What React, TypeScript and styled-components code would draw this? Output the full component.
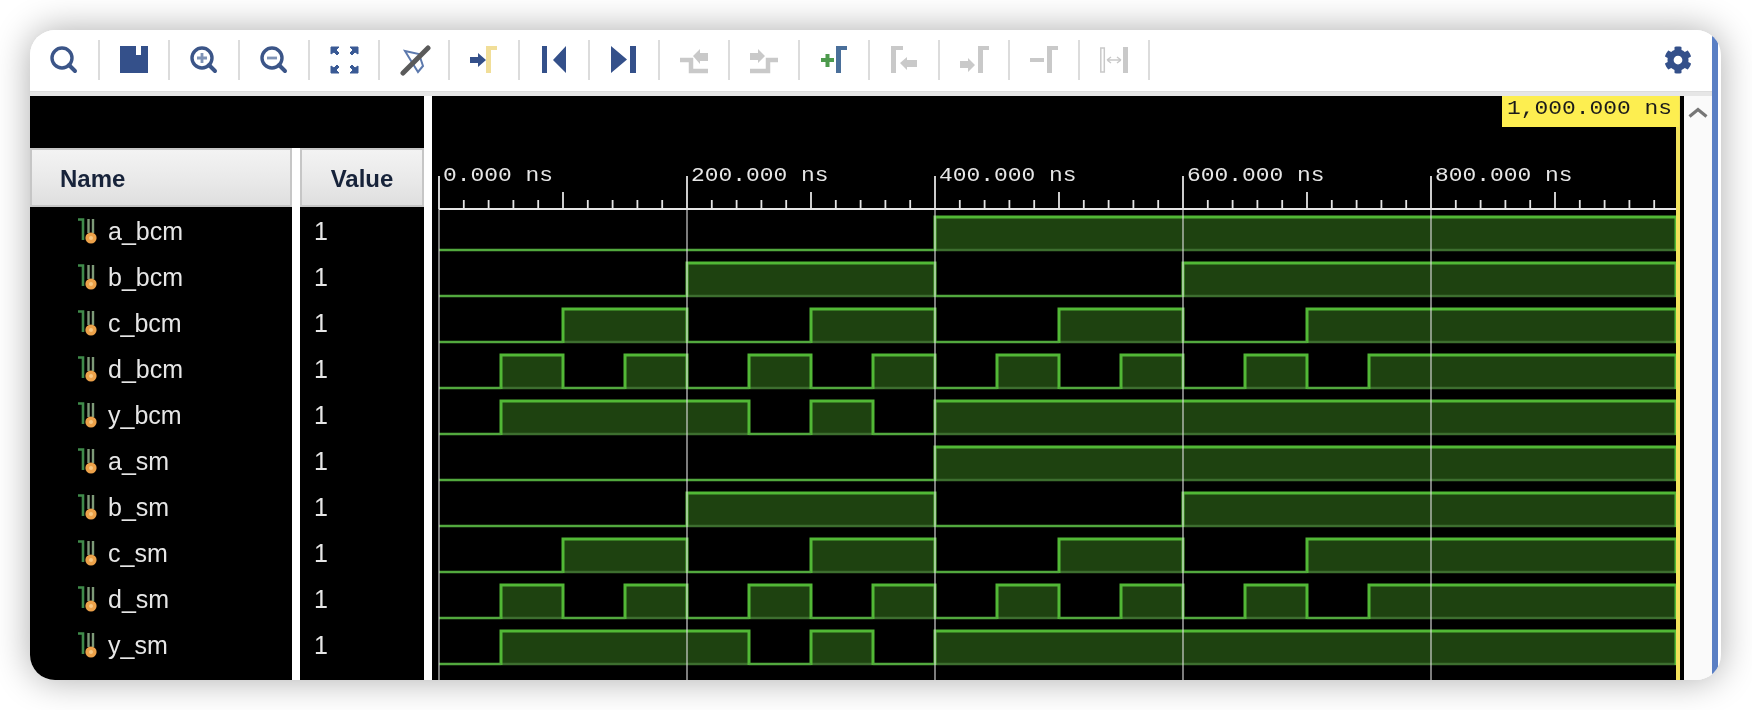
import React from "react";
import styled, { createGlobalStyle } from "styled-components";
import { FaCog } from "react-icons/fa";

const Global = createGlobalStyle`
  html, body { margin: 0; padding: 0; background: #fff; }
  body { width: 1752px; height: 710px; overflow: hidden; font-family: "Liberation Sans", Arial, sans-serif; }
`;

const Page = styled.div`
  width: 1752px;
  height: 710px;
  padding: 30px 31px 30px 30px;
  box-sizing: border-box;
`;

const Card = styled.div`
  display: flex;
  width: 1691px;
  height: 650px;
  padding-right: 3px;
  box-sizing: border-box;
  background: #fff;
  border-radius: 25px;
  overflow: hidden;
  box-shadow: 0 0 36px rgba(0, 0, 0, 0.33);
`;

const Main = styled.div`
  flex: 1;
  display: flex;
  flex-direction: column;
  min-width: 0;
`;

const BlueBar = styled.div`
  width: 6px;
  background: #5a7fc4;
`;

const Toolbar = styled.div`
  display: flex;
  height: 66px;
  box-sizing: border-box;
  padding: 10px 20px 0 0;
  background: #fff;
  border-bottom: 4px solid #e6e6e6;
  box-shadow: inset 0 -1px 0 #ddd;
`;

const ToolCell = styled.div`
  width: 70px;
  height: 40px;
  box-sizing: border-box;
  padding-left: 15px;
  border-right: 2px solid #dcdcdc;
  filter: blur(0.55px);
  svg { display: block; }
`;

const GearBox = styled.div`
  margin-left: auto;
  height: 40px;
  display: flex;
  align-items: center;
  color: #34508a;
  filter: blur(0.5px);
`;

const Body = styled.div`
  flex: 1;
  display: flex;
  min-height: 0;
`;

const LeftPane = styled.div`
  width: 394px;
  margin-right: 8px;
  display: flex;
  flex-direction: column;
  background: #fff;
`;

const TopSpacer = styled.div`
  height: 52px;
  background: #000;
`;

const Columns = styled.div`
  flex: 1;
  display: flex;
  gap: 8px;
`;

const Column = styled.div<{ $width: number }>`
  width: ${(p) => p.$width}px;
  display: flex;
  flex-direction: column;
  background: #000;
`;

const HeaderCell = styled.div<{ $center?: boolean }>`
  height: 59px;
  box-sizing: border-box;
  display: flex;
  align-items: center;
  justify-content: ${(p) => (p.$center ? "center" : "flex-start")};
  padding: ${(p) => (p.$center ? "3px 0 0 0" : "3px 0 0 28px")};
  border: 2px solid #c6c6c6;
  background: linear-gradient(#f3f3f3, #e9e9e9 55%, #dfdfdf);
  color: #17233a;
  font-size: 24px;
  font-weight: 700;
  span { filter: blur(0.45px); }
`;

const Rows = styled.div`
  padding-top: 1px;
`;

const SignalRow = styled.div<{ $indent: number }>`
  height: 46px;
  display: flex;
  align-items: center;
  gap: 9px;
  padding-left: ${(p) => p.$indent}px;
  color: #e6e6e6;
  font-size: 25px;
  filter: blur(0.55px);
`;

const WavePane = styled.div`
  width: 1252px;
  background: #000;
`;

const WaveSvg = styled.svg`
  display: block;
  filter: blur(0.5px);
`;

const ScrollTrack = styled.div`
  width: 28px;
  display: flex;
  justify-content: center;
  padding-top: 11px;
  box-sizing: border-box;
  background: #fafafa;
`;

const BLUE = "#34508a";
const GREY = "#c9c9c9";

const Lens = ({ mark }: { mark?: "plus" | "minus" }) => (
  <svg width="40" height="40" viewBox="0 0 40 40">
    <circle cx="17" cy="18" r="10" fill="none" stroke="#3b5588" strokeWidth="3.4" />
    <path d="M24 25l6 6" stroke="#3b5588" strokeWidth="4" strokeLinecap="round" />
    {mark && <path d={mark === "plus" ? "M12 18h10M17 13v10" : "M12 18h10"} stroke="#7f93b6" strokeWidth="2.8" />}
  </svg>
);

const Svg = ({ children }: { children: React.ReactNode }) => (
  <svg width="40" height="40" viewBox="0 0 40 40">{children}</svg>
);

const Gamma = ({ x, color, w = 11 }: { x: number; color: string; w?: number }) => (
  <path d={`M${x} 6h${w}v4h-${w - 5}v23h-5z`} fill={color} />
);

const icons = [
  <Lens key="search" />,
  <Svg key="save">
    <path fillRule="evenodd" d="M5 6h28v27H5zM21 6v9h5V6z" fill={BLUE} />
  </Svg>,
  <Lens key="in" mark="plus" />,
  <Lens key="out" mark="minus" />,
  <Svg key="fit">
    <g fill="#3a5a95" stroke="#3a5a95" strokeWidth="1">
      <path d="M6 7h8l-3 3 3 3-2 2-3-3-3 2z" />
      <path d="M33 7h-8l3 3-3 3 2 2 3-3 3 2z" />
      <path d="M6 33h8l-3-3 3-3-2-2-3 3-3-2z" />
      <path d="M33 33h-8l3-3-3-3 2-2 3 3 3-2z" />
    </g>
  </Svg>,
  <Svg key="cross">
    <path d="M10 11l14 3 4 12-5 6-5-8z" fill="none" stroke="#5c79ad" strokeWidth="2" />
    <path d="M33 8L8 33" stroke="#5a5a5a" strokeWidth="5" strokeLinecap="round" />
  </Svg>,
  <Svg key="gotocursor">
    <path d="M5 17h8v-4l8 7-8 7v-4H5z" fill={BLUE} />
    <Gamma x={21} color="#f1de98" />
  </Svg>,
  <Svg key="first">
    <path d="M7 6h5v27H7zM31 6v27L18 20z" fill={BLUE} />
  </Svg>,
  <Svg key="last">
    <path d="M6 6v27l16-13.500zM25 6h6v27h-6z" fill={BLUE} />
  </Svg>,
  <Svg key="prevedge">
    <path d="M5 20h11v11h17" fill="none" stroke={GREY} strokeWidth="4.500" />
    <path d="M18 16l7-7v4h8v8h-8v3z" fill={GREY} />
  </Svg>,
  <Svg key="nextedge">
    <path d="M33 20H23v11H5" fill="none" stroke={GREY} strokeWidth="4.500" />
    <path d="M5 13h8V9l7 7-7 7v-3H5z" fill={GREY} />
  </Svg>,
  <Svg key="addmarker">
    <path d="M6 20h13M12.500 14v13" stroke="#4d9a4d" strokeWidth="4" />
    <Gamma x={21} color="#4a6f9a" />
  </Svg>,
  <Svg key="prevmarker">
    <Gamma x={6} color={GREY} w={12} />
    <path d="M15 23l7-6v3h10v7H22v3z" fill={GREY} />
  </Svg>,
  <Svg key="nextmarker">
    <path d="M5 21h8v-3l7 7-7 7v-4H5z" fill={GREY} />
    <Gamma x={23} color={GREY} />
  </Svg>,
  <Svg key="delmarker">
    <path d="M5 18h14v4H5z" fill={GREY} />
    <Gamma x={22} color={GREY} />
  </Svg>,
  <Svg key="swap">
    <rect x="5.800" y="8" width="3.500" height="24" fill="none" stroke={GREY} strokeWidth="1.500" />
    <path d="M28 7h5v26h-5z" fill={GREY} />
    <path d="M12 20h14M12 20l4-3M12 20l4 3M26 20l-4-3M26 20l-4 3" stroke={GREY} strokeWidth="1.400" fill="none" />
  </Svg>,
];

const SignalGlyph = () => (
  <svg width="22" height="26" viewBox="0 0 22 26">
    <path d="M1 1.500h5V22" fill="none" stroke="#3f8a4a" strokeWidth="2.600" />
    <path d="M11.500 1v14M16 1v14" fill="none" stroke="#7d9a78" strokeWidth="2.400" />
    <circle cx="14" cy="20" r="5.600" fill="#eda24a" />
    <circle cx="14" cy="20" r="2" fill="#f7c884" />
  </svg>
);

type Range = [number, number];
const A: Range[] = [[8, 20]];
const B: Range[] = [[4, 8], [12, 20]];
const C: Range[] = [[2, 4], [6, 8], [10, 12], [14, 20]];
const D: Range[] = [[1, 2], [3, 4], [5, 6], [7, 8], [9, 10], [11, 12], [13, 14], [15, 20]];
const Y: Range[] = [[1, 5], [6, 7], [8, 20]];

const signals: { name: string; highs: Range[] }[] = [
  { name: "a_bcm", highs: A },
  { name: "b_bcm", highs: B },
  { name: "c_bcm", highs: C },
  { name: "d_bcm", highs: D },
  { name: "y_bcm", highs: Y },
  { name: "a_sm", highs: A },
  { name: "b_sm", highs: B },
  { name: "c_sm", highs: C },
  { name: "d_sm", highs: D },
  { name: "y_sm", highs: Y },
];

const X0 = 439;
const UNIT = 62;
const END = 1676;
const px = (u: number) => Math.min(X0 + u * UNIT, END);

const Wave = ({ highs, index }: { highs: Range[]; index: number }) => {
  const low = 250 + index * 46;
  const high = low - 33;
  const lows: Range[] = [];
  let cursor = 0;
  highs.forEach(([s, e]) => {
    if (s > cursor) lows.push([cursor, s]);
    cursor = e;
  });
  return (
    <g>
      {highs.map(([s, e]) => (
        <rect key={s} x={px(s)} y={high} width={px(e) - px(s)} height={33} fill="#1e4210" />
      ))}
      {highs.map(([s, e]) => (
        <path key={s} d={`M${px(s)} ${low}H${px(e)}`} stroke="#3d6e2f" strokeWidth="2.400" />
      ))}
      <path
        d={highs.map(([s, e]) => `M${px(s)} ${low + 1}V${high}H${px(e)}V${low + 1}`).join("")}
        fill="none"
        stroke="#52b836"
        strokeWidth="3"
      />
      {lows.map(([s, e]) => (
        <path key={s} d={`M${px(s)} ${low}H${px(e)}`} stroke="#52a83e" strokeWidth="2.600" />
      ))}
    </g>
  );
};

const majors = [0, 1, 2, 3, 4].map((i) => X0 + i * 248);
const ticks = Array.from({ length: 50 }, (_, i) => i).filter((i) => i % 10 !== 0);
const CHAR = 13.75;

const Label = ({ x, y, text, fill }: { x: number; y: number; text: string; fill: string }) => (
  <text
    x={x}
    y={y}
    fill={fill}
    fontFamily="'Liberation Mono', monospace"
    fontSize="20"
    textLength={text.length * CHAR}
    lengthAdjust="spacingAndGlyphs"
  >
    {text}
  </text>
);

export default function App() {
  return (
    <Page>
      <Global />
      <Card>
        <Main>
          <Toolbar>
            {icons.map((icon) => (
              <ToolCell key={icon.key}>{icon}</ToolCell>
            ))}
            <GearBox>
              <FaCog size={28} />
            </GearBox>
          </Toolbar>
          <Body>
            <LeftPane>
              <TopSpacer />
              <Columns>
                <Column $width={262}>
                  <HeaderCell>
                    <span>Name</span>
                  </HeaderCell>
                  <Rows>
                    {signals.map((s) => (
                      <SignalRow key={s.name} $indent={47}>
                        <SignalGlyph />
                        {s.name}
                      </SignalRow>
                    ))}
                  </Rows>
                </Column>
                <Column $width={124}>
                  <HeaderCell $center>
                    <span>Value</span>
                  </HeaderCell>
                  <Rows>
                    {signals.map((s) => (
                      <SignalRow key={s.name} $indent={14}>
                        1
                      </SignalRow>
                    ))}
                  </Rows>
                </Column>
              </Columns>
            </LeftPane>
            <WavePane>
              <WaveSvg width="1252" height="584" viewBox="432 96 1252 584">
                {signals.map((s, i) => (
                  <Wave key={s.name} highs={s.highs} index={i} />
                ))}
                <path d={`M${X0} 209H${END}`} stroke="#e4e4e4" strokeWidth="2" />
                {ticks.map((i) => {
                  const x = X0 + i * 24.8;
                  return x < END ? (
                    <path key={i} d={`M${x} ${i % 5 === 0 ? 192 : 200}V209`} stroke="#e4e4e4" strokeWidth="1.800" />
                  ) : null;
                })}
                {majors.map((x, i) => (
                  <g key={x}>
                    <path d={`M${x} 176V209`} stroke="#e4e4e4" strokeWidth="1.800" />
                    <path d={`M${x} 209V680`} stroke="rgba(225,225,225,0.62)" strokeWidth="1.800" />
                    <Label x={x + 4} y={181} fill="#e6e6e6" text={`${i * 200}.000 ns`} />
                  </g>
                ))}
                <rect x="1676" y="96" width="4" height="584" fill="#f2e25a" />
                <rect x="1502" y="96" width="177" height="31" fill="#fdee50" />
                <Label x={1507} y={114} fill="#1a1a1a" text="1,000.000 ns" />
              </WaveSvg>
            </WavePane>
            <ScrollTrack>
              <svg width="20" height="11" viewBox="0 0 20 11">
                <path d="M1.500 9.500L10 2.500l8.500 7" fill="none" stroke="#777" strokeWidth="3.200" />
              </svg>
            </ScrollTrack>
          </Body>
        </Main>
        <BlueBar />
      </Card>
    </Page>
  );
}
